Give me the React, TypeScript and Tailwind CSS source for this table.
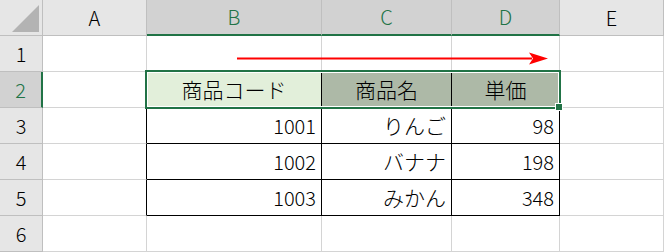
import React from "react";

const GRID = "border-[#d4d4d4]";
const font = { fontFamily: '"Noto Sans CJK JP", "Noto Sans", sans-serif' };

type Cell = {
  text?: string;
  align?: "left" | "center" | "right";
  fill?: string;
  kana?: boolean;
  black?: { r?: boolean; b?: boolean };
};

const cols = ["A", "B", "C", "D", "E"];

const rows: Cell[][] = [
  [{}, { black: { b: true } }, { black: { b: true } }, { black: { b: true } }, {}],
  [
    { black: { r: true } },
    { text: "商品コード", align: "center", kana: true, fill: "bg-[#e2efda]", black: { r: true, b: true } },
    { text: "商品名", align: "center", kana: true, fill: "bg-[#adb9a7]", black: { r: true, b: true } },
    { text: "単価", align: "center", kana: true, fill: "bg-[#adb9a7]", black: { r: true, b: true } },
    {},
  ],
  [
    { black: { r: true } },
    { text: "1001", align: "right", black: { r: true, b: true } },
    { text: "りんご", align: "right", kana: true, black: { r: true, b: true } },
    { text: "98", align: "right", black: { r: true, b: true } },
    {},
  ],
  [
    { black: { r: true } },
    { text: "1002", align: "right", black: { r: true, b: true } },
    { text: "バナナ", align: "right", kana: true, black: { r: true, b: true } },
    { text: "198", align: "right", black: { r: true, b: true } },
    {},
  ],
  [
    { black: { r: true } },
    { text: "1003", align: "right", black: { r: true, b: true } },
    { text: "みかん", align: "right", kana: true, black: { r: true, b: true } },
    { text: "348", align: "right", black: { r: true, b: true } },
    {},
  ],
  [{}, {}, {}, {}, {}],
];

function CellBox({ cell }: { cell: Cell }) {
  const justify =
    cell.align === "right" ? "justify-end pr-[5px]" : cell.align === "center" ? "justify-center" : "justify-start";
  const rColor = cell.black?.r ? "border-r-black" : "border-r-[#d4d4d4]";
  const bColor = cell.black?.b ? "border-b-black" : "border-b-[#d4d4d4]";
  const size = cell.kana ? "text-[21px]" : "text-[20px]";
  return (
    <div
      className={`flex items-center ${justify} border-r border-b ${rColor} ${bColor} ${cell.fill ?? "bg-white"} ${size} font-light leading-none text-black`}
    >
      {cell.text}
    </div>
  );
}

export default function App() {
  return (
    <div className="w-[664px] h-[252px] overflow-hidden bg-white" style={font}>
      <div className="relative grid grid-cols-[43px_104px_175px_130px_108px_104px] grid-rows-[36px_repeat(6,36px)]">
        {/* corner */}
        <div className={`relative border-r border-b ${GRID} border-r-[#bfbfbf] border-b-[#bfbfbf] bg-[#e6e6e6]`}>
          <svg className="absolute left-0 top-0" width="43" height="36" viewBox="0 0 43 36">
            <polygon points="39,5 39,32 12,32" fill="#b3b3b3" />
          </svg>
        </div>
        {cols.map((c, i) => {
          const sel = i >= 1 && i <= 3;
          return (
            <div
              key={c}
              className={`flex items-center justify-center text-[20px] font-light leading-none ${
                sel
                  ? "bg-[#d2d2d2] text-[#217346] border-b-2 border-b-[#217346] border-r border-r-[#bfbfbf]"
                  : "bg-[#e6e6e6] text-black border-b border-b-[#bfbfbf] border-r border-r-[#bfbfbf]"
              }`}
            >
              {c}
            </div>
          );
        })}
        {rows.map((r, ri) => (
          <React.Fragment key={ri}>
            <div
              className={`flex items-center justify-center text-[20px] font-light leading-none border-b border-b-[#bfbfbf] ${
                ri === 1
                  ? "bg-[#d2d2d2] text-[#217346] border-r-2 border-r-[#217346]"
                  : "bg-[#e6e6e6] text-black border-r border-r-[#bfbfbf]"
              }`}
            >
              {ri + 1}
            </div>
            {r.map((cell, ci) => (
              <CellBox key={ci} cell={cell} />
            ))}
          </React.Fragment>
        ))}

        {/* selection B2:D2 */}
        <div className="pointer-events-none absolute left-[145px] top-[70px] w-[416px] h-[39px] border-2 border-[#217346] shadow-[inset_0_0_0_1px_#ffffff]" />
        <div className="pointer-events-none absolute left-[555px] top-[103px] w-[8px] h-[8px] bg-[#217346] border border-white" />

        {/* arrow in row 1 */}
        <svg className="pointer-events-none absolute left-0 top-0" width="664" height="252" viewBox="0 0 664 252">
          <line x1="237" y1="58.5" x2="532" y2="58.5" stroke="#ff0000" strokeWidth="2" />
          <polygon points="529,52.5 548,58.5 529,64.5 533,58.5" fill="#ff0000" />
        </svg>
      </div>
    </div>
  );
}
